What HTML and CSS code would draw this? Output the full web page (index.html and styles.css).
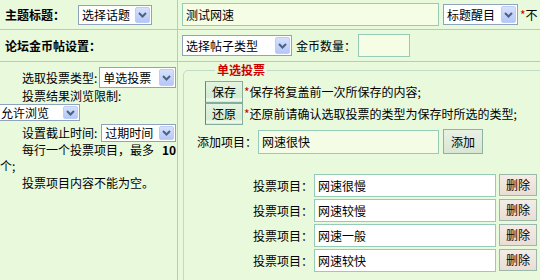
FILE: index.html
```html
<!DOCTYPE html>
<html lang="zh-CN">
<head>
<meta charset="utf-8">
<title>投票帖</title>
<link rel="stylesheet" href="styles.css">
</head>
<body>
<div class="form">
  <div class="cell left r1">
    <b class="title">主题标题：</b>
    <span class="sel s-topic">选择话题<i class="arr"><svg width="9" height="6" viewBox="0 0 9 6"><path d="M1 1l3.5 3.5L8 1" fill="none" stroke="#4d6185" stroke-width="2"/></svg></i></span>
  </div>
  <div class="cell right r1">
    <input class="inp i-title" type="text" value="测试网速">
    <span class="sel s-hl">标题醒目<i class="arr"><svg width="9" height="6" viewBox="0 0 9 6"><path d="M1 1l3.5 3.5L8 1" fill="none" stroke="#4d6185" stroke-width="2"/></svg></i></span>
    <span class="note"><em class="red">*</em>不</span>
  </div>

  <div class="cell left r2">
    <b class="title">论坛金币帖设置：</b>
  </div>
  <div class="cell right r2">
    <span class="sel s-type">选择帖子类型<i class="arr"><svg width="9" height="6" viewBox="0 0 9 6"><path d="M1 1l3.5 3.5L8 1" fill="none" stroke="#4d6185" stroke-width="2"/></svg></i></span>
    <span class="coin-lbl">金币数量：</span>
    <input class="inp i-coin" type="text" value="">
  </div>

  <div class="cell left r3">
    <div class="l ind l1">选取投票类型:<span class="sel s-vtype">单选投票<i class="arr"><svg width="9" height="6" viewBox="0 0 9 6"><path d="M1 1l3.5 3.5L8 1" fill="none" stroke="#4d6185" stroke-width="2"/></svg></i></span></div>
    <div class="l ind l2">投票结果浏览限制:</div>
    <div class="l l3"><span class="sel s-view">允许浏览<i class="arr"><svg width="9" height="6" viewBox="0 0 9 6"><path d="M1 1l3.5 3.5L8 1" fill="none" stroke="#4d6185" stroke-width="2"/></svg></i></span></div>
    <div class="l ind l4">设置截止时间:<span class="sel s-end">过期时间<i class="arr"><svg width="9" height="6" viewBox="0 0 9 6"><path d="M1 1l3.5 3.5L8 1" fill="none" stroke="#4d6185" stroke-width="2"/></svg></i></span></div>
    <div class="l ind l5">每行一个投票项目，最多<b class="num">10</b></div>
    <div class="l l6">个;</div>
    <div class="l ind l7">投票项目内容不能为空。</div>
  </div>
  <div class="cell right r3">
    <fieldset class="box">
      <legend class="legend">单选投票</legend>
      <div class="notes">
        <div class="note-row"><button class="btn btn-g">保存</button><span class="tip"><em class="red">*</em>保存将复盖前一次所保存的内容;</span></div>
        <div class="note-row"><button class="btn btn-g">还原</button><span class="tip"><em class="red">*</em>还原前请确认选取投票的类型为保存时所选的类型;</span></div>
      </div>
      <div class="add-row">
        <span class="lbl">添加项目：</span>
        <input class="inp i-add" type="text" value="网速很快">
        <button class="btn btn-add">添加</button>
      </div>
      <div class="items">
        <div class="item"><span class="lbl">投票项目：</span><input class="inp i-item" type="text" value="网速很慢"><button class="btn btn-del">删除</button></div>
        <div class="item"><span class="lbl">投票项目：</span><input class="inp i-item" type="text" value="网速较慢"><button class="btn btn-del">删除</button></div>
        <div class="item"><span class="lbl">投票项目：</span><input class="inp i-item" type="text" value="网速一般"><button class="btn btn-del">删除</button></div>
        <div class="item"><span class="lbl">投票项目：</span><input class="inp i-item" type="text" value="网速较快"><button class="btn btn-del">删除</button></div>
      </div>
    </fieldset>
  </div>
</div>
</body>
</html>
```

FILE: styles.css
```css
html, body {
  margin: 0;
  padding: 0;
}
body {
  background: #e9f9dc;
  font-family: "Noto Sans CJK SC", "Noto Sans", sans-serif;
  font-size: 12px;
  line-height: 14px;
  color: #000;
  width: 540px;
  height: 280px;
  overflow: hidden;
}
input, button {
  font: inherit;
  color: #000;
  margin: 0;
}
.red {
  color: #cc0000;
  font-style: normal;
}

.form {
  display: grid;
  grid-template-columns: 178px 430px;
  width: 608px;
}
.cell {
  box-sizing: border-box;
  border-bottom: 1px solid #a3d4c2;
}
.left {
  border-right: 1px solid #a3d4c2;
}
.r1 {
  height: 30px;
  display: flex;
  align-items: center;
}
.r2 {
  height: 32px;
  display: flex;
  align-items: center;
}
.r3 {
  height: 230px;
}
.left.r1, .left.r2 {
  padding-left: 5px;
}
.right.r1, .right.r2 {
  padding-left: 4px;
}
.title {
  font-weight: bold;
  white-space: nowrap;
}

/* custom select */
.sel {
  display: inline-flex;
  align-items: center;
  justify-content: space-between;
  box-sizing: border-box;
  border: 1px solid #8ea4bd;
  background: #fff;
  padding-left: 3px;
  padding-right: 1px;
  white-space: nowrap;
  flex: none;
}
.arr {
  display: flex;
  align-items: center;
  justify-content: center;
  box-sizing: border-box;
  width: 15px;
  height: calc(100% - 2px);
  border: 1px solid #bccdf7;
  border-radius: 2px;
  background: linear-gradient(#d6e1fd, #b4c7f6);
}
.s-topic { width: 74px; height: 20px; margin-left: 13px; }
.s-hl { width: 75px; height: 21px; margin-left: 4px; }
.s-type { width: 110px; height: 21px; }
.s-vtype { width: 77px; height: 21px; margin-left: 2px; }
.s-view { width: 83px; height: 17px; margin-left: -3px; }
.s-end { width: 75px; height: 18px; margin-left: 4px; }

/* text inputs */
.inp {
  box-sizing: border-box;
  border: 1px solid #97cbb9;
  background: #f5fde4;
  padding: 0 3px;
  outline: none;
  flex: none;
}
.i-title { width: 257px; height: 23px; }
.note { margin-left: 2px; white-space: nowrap; }
.coin-lbl { margin-left: 4px; white-space: nowrap; }
.i-coin { width: 52px; height: 23px; margin-left: 2px; }

/* left column of vote settings */
.left.r3 {
  padding-top: 5px;
}
.l {
  display: flex;
  align-items: center;
  white-space: nowrap;
}
.ind { padding-left: 22px; }
.l1 { height: 21px; }
.l2 { height: 15px; }
.l3 { height: 19px; }
.l4 { height: 21px; }
.l5 { height: 14px; }
.l6 { height: 18px; }
.l7 { height: 16px; }
.num { margin-left: 8px; font-weight: bold; }

/* vote box */
.right.r3 {
  padding-left: 5px;
}
.box {
  margin: 0;
  padding: 0 0 10px 0;
  min-width: 0;
  border: 1px solid #c2dbc6;
  border-radius: 5px;
}
.legend {
  margin-left: 31px;
  padding: 0 2px;
  color: #cc0000;
  font-weight: bold;
  line-height: 16px;
}
.notes {
  margin: 3px 0 0 21px;
}
.note-row {
  display: flex;
  align-items: center;
  white-space: nowrap;
}
.tip { margin-left: 1px; }

.btn {
  box-sizing: border-box;
  padding: 0;
  cursor: pointer;
  flex: none;
}
.btn-g {
  width: 38px;
  height: 22px;
  border: 1px solid #86ad9c;
  border-left-color: #5f8a78;
  background: linear-gradient(#e3f4e1 0%, #d3ecd2 75%, #f2fdf0 90%, #cfe6cf 100%);
}
.add-row {
  display: flex;
  align-items: center;
  margin: 4px 0 0 13px;
  white-space: nowrap;
}
.lbl { white-space: nowrap; }
.i-add {
  width: 181px;
  height: 24px;
  margin-left: 1px;
  background: #f4fce6;
}
.btn-add {
  width: 40px;
  height: 25px;
  margin-left: 4px;
  border: 1px solid #8db3a3;
  background: linear-gradient(#e9f1e4, #d9e6d3);
}
.items {
  margin: 20px 0 0 69px;
}
.item {
  display: flex;
  align-items: flex-start;
  margin-bottom: 2px;
}
.item .lbl {
  line-height: 23px;
}
.i-item {
  width: 182px;
  height: 23px;
  margin-left: 1px;
  background: #fff;
}
.btn-del {
  width: 38px;
  height: 22px;
  margin-left: 3px;
  border: 1px solid #9cb8ab;
  background: linear-gradient(#f4ece6, #e8ded6);
}
```
